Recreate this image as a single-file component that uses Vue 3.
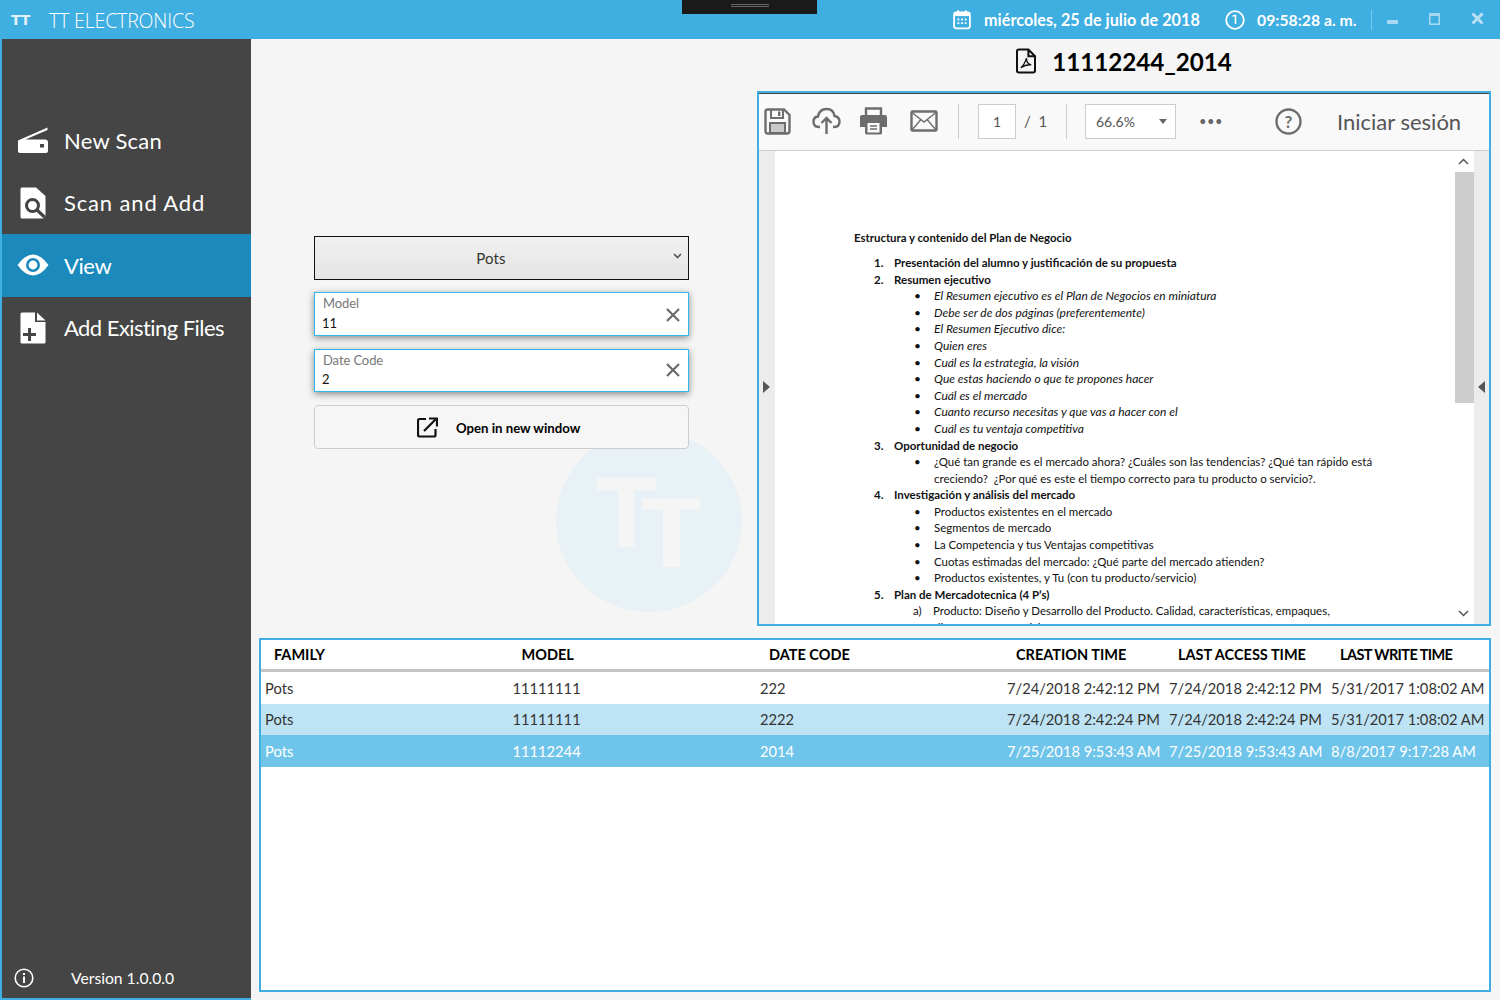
<script setup>
import { ref } from "vue";

const menu = ref([
  { label: "New Scan", icon: "scan", spacing: "0.25px" },
  { label: "Scan and Add", icon: "search", spacing: "0.85px" },
  { label: "View", icon: "eye", active: true, spacing: "-0.4px" },
  { label: "Add Existing Files", icon: "add", spacing: "-0.55px" },
]);

const rows = ref([
  { family: "Pots", model: "11111111", date: "222", created: "7/24/2018 2:42:12 PM", access: "7/24/2018 2:42:12 PM", write: "5/31/2017 1:08:02 AM" },
  { family: "Pots", model: "11111111", date: "2222", created: "7/24/2018 2:42:24 PM", access: "7/24/2018 2:42:24 PM", write: "5/31/2017 1:08:02 AM", cls: "hover" },
  { family: "Pots", model: "11112244", date: "2014", created: "7/25/2018 9:53:43 AM", access: "7/25/2018 9:53:43 AM", write: "8/8/2017 9:17:28 AM", cls: "selected" },
]);

const columns = ["FAMILY", "MODEL", "DATE CODE", "CREATION TIME", "LAST ACCESS TIME", "LAST WRITE TIME"];

//pdf page content, kind decides the indent
const pdfLines = [
  { kind: "num", mark: "1.", text: "Presentación del alumno y justificación de su propuesta" },
  { kind: "num", mark: "2.", text: "Resumen ejecutivo" },
  { kind: "it", mark: "•", text: "El Resumen ejecutivo es el Plan de Negocios en miniatura" },
  { kind: "it", mark: "•", text: "Debe ser de dos páginas (preferentemente)" },
  { kind: "it", mark: "•", text: "El Resumen Ejecutivo dice:" },
  { kind: "it", mark: "•", text: "Quien eres" },
  { kind: "it", mark: "•", text: "Cuál es la estrategia, la visión" },
  { kind: "it", mark: "•", text: "Que estas haciendo o que te propones hacer" },
  { kind: "it", mark: "•", text: "Cuál es el mercado" },
  { kind: "it", mark: "•", text: "Cuanto recurso necesitas y que vas a hacer con el" },
  { kind: "it", mark: "•", text: "Cuál es tu ventaja competitiva" },
  { kind: "num", mark: "3.", text: "Oportunidad de negocio" },
  { kind: "sub", mark: "•", text: "¿Qué tan grande es el mercado ahora? ¿Cuáles son las tendencias? ¿Qué tan rápido está" },
  { kind: "sub", mark: "", text: "creciendo?  ¿Por qué es este el tiempo correcto para tu producto o servicio?." },
  { kind: "num", mark: "4.", text: "Investigación y análisis del mercado" },
  { kind: "sub", mark: "•", text: "Productos existentes en el mercado" },
  { kind: "sub", mark: "•", text: "Segmentos de mercado" },
  { kind: "sub", mark: "•", text: "La Competencia y tus Ventajas competitivas" },
  { kind: "sub", mark: "•", text: "Cuotas estimadas del mercado: ¿Qué parte del mercado atienden?" },
  { kind: "sub", mark: "•", text: "Productos existentes, y Tu (con tu producto/servicio)" },
  { kind: "num", mark: "5.", text: "Plan de Mercadotecnica (4 P’s)" },
  { kind: "alpha", mark: "a)", text: "Producto: Diseño y Desarrollo del Producto. Calidad, características, empaques," },
  { kind: "sub", mark: "", text: "diseño, marca, servicios y garantías." },
];
</script>

<template>
  <div class="window">
    <header class="titlebar">
      <div class="brand">
        <span class="logo">TT</span>
        <span class="app-name">TT ELECTRONICS</span>
      </div>
      <div class="notch"><span></span></div>
      <div class="status">
        <svg class="st-icon" width="18" height="21" viewBox="0 0 20 22">
          <rect x="1.2" y="3.2" width="17.6" height="17.6" rx="2.5" fill="none" stroke="#fff" stroke-width="2" />
          <rect x="1.2" y="3.2" width="17.6" height="4" fill="#fff" />
          <rect x="4.5" y="0.8" width="2.4" height="4" rx="1" fill="#fff" />
          <rect x="13" y="0.8" width="2.4" height="4" rx="1" fill="#fff" />
          <path d="M5 10h2v2H5zM9 10h2v2H9zM13 10h2v2h-2zM5 14h2v2H5zM9 14h2v2H9zM13 14h2v2h-2z" fill="#fff" />
        </svg>
        <span class="st-text date">miércoles, 25 de julio de 2018</span>
        <svg class="st-icon" width="20" height="20" viewBox="0 0 20 20">
          <circle cx="10" cy="10" r="8.8" fill="none" stroke="#fff" stroke-width="1.8" />
          <path d="M7.5 6 L10.5 5.5 V14" fill="none" stroke="#fff" stroke-width="1.6" />
        </svg>
        <span class="st-text time">09:58:28 a. m.</span>
        <span class="st-sep"></span>
        <div class="win-btns">
          <svg width="11" height="11" viewBox="0 0 11 11"><rect x="0" y="7" width="11" height="4" fill="#a6d9f1" /></svg>
          <svg width="11" height="12" viewBox="0 0 11 12"><rect x="0.8" y="0.8" width="9.4" height="10.4" fill="none" stroke="#a6d9f1" stroke-width="1.6" /><rect x="0" y="0" width="11" height="3" fill="#a6d9f1" /></svg>
          <svg width="13" height="13" viewBox="0 0 13 13"><path d="M1.5 1.5 L11.5 11.5 M11.5 1.5 L1.5 11.5" stroke="#b8e1f4" stroke-width="3" /></svg>
        </div>
      </div>
    </header>

    <div class="body">
      <aside class="sidebar">
        <nav class="menu">
          <div v-for="item in menu" :key="item.label" class="menu-item" :class="{ active: item.active }">
            <span class="menu-icon">
              <svg v-if="item.icon === 'scan'" width="32" height="27" viewBox="0 0 32 27">
                <path d="M1 13.500 L30.500 0.500 V3 L8.500 12.500 H28 Q31 12.500 31 15.500 V24 Q31 26 29 26 H3 Q1 26 1 24 Z" fill="#fff" />
                <rect x="23" y="17" width="4" height="3.500" fill="#454545" />
              </svg>
              <svg v-else-if="item.icon === 'search'" width="26" height="32" viewBox="0 0 26 32">
                <path d="M2 0.5 H16 L25.5 9 V29 L23 31.5 H2 Q0.5 31.5 0.5 30 V2 Q0.5 0.5 2 0.5 Z" fill="#fff" />
                <circle cx="12.5" cy="18.5" r="6" fill="none" stroke="#454545" stroke-width="3" />
                <path d="M17 23 L24.5 30" stroke="#454545" stroke-width="3.2" />
              </svg>
              <svg v-else-if="item.icon === 'eye'" width="32" height="22" viewBox="0 0 32 22">
                <path d="M0.5 11 Q8 0.5 16 0.5 Q24 0.5 31.5 11 Q24 21.5 16 21.5 Q8 21.5 0.5 11 Z" fill="#fff" />
                <circle cx="16" cy="11" r="7" fill="#1b89bc" />
                <circle cx="16" cy="11" r="4.4" fill="#fff" />
              </svg>
              <svg v-else width="26" height="32" viewBox="0 0 26 32">
                <path d="M2 0.5 H15 V10 H25.5 V30 Q25.5 31.5 24 31.5 H2 Q0.5 31.5 0.5 30 V2 Q0.5 0.5 2 0.5 Z M17 0.5 L25.5 8.5 H17 Z" fill="#fff" />
                <path d="M3 22.5 H16 M9.5 16 V29" stroke="#454545" stroke-width="3" />
              </svg>
            </span>
            <span class="menu-label" :style="{ letterSpacing: item.spacing }">{{ item.label }}</span>
          </div>
        </nav>
        <div class="version">
          <svg width="20" height="20" viewBox="0 0 20 20">
            <circle cx="10" cy="10" r="8.8" fill="none" stroke="#fff" stroke-width="1.6" />
            <rect x="9" y="8.5" width="2" height="6.5" fill="#fff" />
            <rect x="9" y="5" width="2" height="2" fill="#fff" />
          </svg>
          <span>Version 1.0.0.0</span>
        </div>
      </aside>

      <main class="main">
        <div class="top">
          <section class="form">
            <div class="select">
              <span>Pots</span>
              <svg class="chev" width="9" height="6" viewBox="0 0 9 6"><path d="M1 1 L4.5 4.5 L8 1" fill="none" stroke="#555" stroke-width="1.6" /></svg>
            </div>
            <div class="field">
              <label>Model</label>
              <div class="value">11</div>
              <svg class="clear" width="16" height="16" viewBox="0 0 16 16"><path d="M2 2 L14 14 M14 2 L2 14" stroke="#6a6a6a" stroke-width="2.200" /></svg>
            </div>
            <div class="field short">
              <label>Date Code</label>
              <div class="value">2</div>
              <svg class="clear" width="16" height="16" viewBox="0 0 16 16"><path d="M2 2 L14 14 M14 2 L2 14" stroke="#6a6a6a" stroke-width="2.200" /></svg>
            </div>
            <button class="open-btn">
              <svg width="21" height="21" viewBox="0 0 21 21">
                <path d="M9 2 H2.5 Q1 2 1 3.5 V18 Q1 19.5 2.5 19.5 H17 Q18.5 19.5 18.5 18 V12" fill="none" stroke="#111" stroke-width="2.200" />
                <path d="M7 14 L18.5 2.500 M12 1.500 H20 V9.500" fill="none" stroke="#111" stroke-width="2.200" />
              </svg>
              <span>Open in new window</span>
            </button>
          </section>

          <section class="doc">
            <h1 class="doc-title">
              <svg width="20" height="26" viewBox="0 0 21 26">
                <path d="M3 1 H13 L20 8 V23 Q20 25 18 25 H3 Q1 25 1 23 V3 Q1 1 3 1 Z M13 1 V8 H20" fill="none" stroke="#111" stroke-width="2.200" />
                <path d="M5 20 Q9 17 11 10 Q11 16 16 17 Q10 16.500 5 20 Z" fill="none" stroke="#111" stroke-width="1.400" />
              </svg>
              <span>11112244_2014</span>
            </h1>
            <div class="viewer">
              <div class="toolbar">
                <svg class="tool" width="27" height="27" viewBox="0 0 27 27">
                  <path d="M3.500 1.500 H20 L25.500 7 V23 Q25.500 25.500 23 25.500 H4 Q1.500 25.500 1.500 23 V3.500 Q1.500 1.500 3.500 1.500 Z" fill="none" stroke="#6d6d6d" stroke-width="2.400" />
                  <path d="M7 2 V10 H19 V2" fill="none" stroke="#6d6d6d" stroke-width="2" />
                  <rect x="14" y="3.500" width="2.400" height="4.500" fill="#6d6d6d" />
                  <rect x="6" y="15" width="15" height="10" fill="#c9c9c9" stroke="#6d6d6d" stroke-width="2" />
                </svg>
                <svg class="tool upload" width="29" height="28" viewBox="0 0 29 28">
                  <path d="M8 20 H7 Q1.500 20 1.500 14.500 Q1.500 10 6 9.500 Q7.500 2 14.500 2 Q21.500 2 22.500 9 Q27.500 10 27.500 14.500 Q27.500 20 22 20 H21" fill="none" stroke="#6d6d6d" stroke-width="2.400" />
                  <path d="M14.500 27 V11 M9.500 16 L14.500 11 L19.500 16" fill="none" stroke="#6d6d6d" stroke-width="2.400" />
                </svg>
                <svg class="tool print" width="29" height="28" viewBox="0 0 29 28">
                  <path d="M7 8 V1.500 H22 V8" fill="none" stroke="#6d6d6d" stroke-width="2.400" />
                  <path d="M3 8 H26 Q28 8 28 10 V20 H23 V26 Q23 27.500 21 27.500 H8 Q6 27.500 6 26 V20 H1 V10 Q1 8 3 8 Z" fill="#6d6d6d" />
                  <rect x="8.500" y="16" width="12" height="9.500" fill="#f9f9f9" />
                  <path d="M11 19 H18 M11 22 H18" stroke="#6d6d6d" stroke-width="1.400" />
                </svg>
                <svg class="tool mail" width="28" height="22" viewBox="0 0 28 22">
                  <rect x="1.500" y="1.500" width="25" height="19" rx="1" fill="none" stroke="#6d6d6d" stroke-width="2.400" />
                  <path d="M2 2.500 L14 12 L26 2.500 M2 20 L11 9.500 M26 20 L17 9.500" fill="none" stroke="#6d6d6d" stroke-width="1.400" />
                </svg>
                <span class="tb-sep first"></span>
                <span class="page-box">1</span>
                <span class="page-of">/ &nbsp;1</span>
                <span class="tb-sep second"></span>
                <span class="zoom-box">66.6%<i class="caret"></i></span>
                <span class="more">•••</span>
                <svg class="help" width="27" height="27" viewBox="0 0 27 27">
                  <circle cx="13.500" cy="13.500" r="12" fill="none" stroke="#6d6d6d" stroke-width="2.400" />
                  <text x="13.500" y="19.500" text-anchor="middle" font-size="17" font-weight="700" font-family="Lato, sans-serif" fill="#6d6d6d">?</text>
                </svg>
                <span class="login">Iniciar sesión</span>
              </div>
              <div class="pdf-area">
                <div class="side-strip left"><i class="arrow-r"></i></div>
                <div class="page">
                  <div class="pdf-heading">Estructura y contenido del Plan de Negocio</div>
                  <div v-for="(line, i) in pdfLines" :key="i" class="pdf-line" :class="line.kind">
                    <span class="mark">{{ line.mark }}</span>
                    <span>{{ line.text }}</span>
                  </div>
                </div>
                <div class="scrollbar">
                  <svg width="11" height="7" viewBox="0 0 11 7"><path d="M1 6 L5.500 1.500 L10 6" fill="none" stroke="#555" stroke-width="1.500" /></svg>
                  <div class="thumb"></div>
                  <svg class="down" width="11" height="7" viewBox="0 0 11 7"><path d="M1 1 L5.500 5.500 L10 1" fill="none" stroke="#555" stroke-width="1.500" /></svg>
                </div>
                <div class="side-strip right"><i class="arrow-l"></i></div>
              </div>
            </div>
          </section>

          <!-- watermark logo, sits behind the form and the viewer -->
          <svg class="watermark" width="186" height="182" viewBox="0 0 186 182">
            <ellipse cx="93" cy="91" rx="93" ry="91" fill="#e8f1f5" />
            <path d="M41 48 H100 V60 H78 V117 H62 V60 H41 Z" fill="#f5f5f5" />
            <path d="M86 68 H144 V80 H124 V137 H107 V80 H86 Z" fill="#f5f5f5" />
          </svg>
        </div>

        <section class="table">
          <div class="thead">
            <div v-for="col in columns" :key="col" class="th">{{ col }}</div>
          </div>
          <div v-for="row in rows" :key="row.date" class="tr" :class="row.cls">
            <div class="td">{{ row.family }}</div>
            <div class="td">{{ row.model }}</div>
            <div class="td">{{ row.date }}</div>
            <div class="td">{{ row.created }}</div>
            <div class="td">{{ row.access }}</div>
            <div class="td">{{ row.write }}</div>
          </div>
        </section>
      </main>
    </div>
  </div>
</template>

<style>
html,
body {
  margin: 0;
  background: #f5f5f5;
}
</style>

<style scoped>
.window {
  width: 1500px;
  height: 1000px;
  display: flex;
  flex-direction: column;
  overflow: hidden;
  font-family: Lato, "Open Sans", sans-serif;
  color: #111;
  background: #f5f5f5;
}

/* title bar */
.titlebar {
  height: 39px;
  flex: none;
  background: #3faee0;
  display: flex;
  align-items: center;
  position: relative;
  color: #fff;
}
.brand {
  display: flex;
  align-items: center;
  padding-left: 11px;
}
.logo {
  font: 700 14px "DejaVu Sans", sans-serif;
  width: 38px;
  opacity: 0.85;
}
.app-name {
  font: 300 19.5px "Open Sans", sans-serif;
  letter-spacing: -0.15px;
  padding-top: 1px;
}
.notch {
  position: absolute;
  left: 682px;
  top: 0;
  width: 135px;
  height: 14px;
  background: #1a1a1a;
  display: flex;
  justify-content: center;
  padding-top: 4px;
  box-sizing: border-box;
}
.notch span {
  width: 38px;
  height: 3px;
  border-top: 1px solid #666;
  border-bottom: 1px solid #666;
  box-sizing: border-box;
}
.status {
  margin-left: auto;
  display: flex;
  align-items: center;
  height: 100%;
}
.st-text {
  font-weight: 700;
  letter-spacing: 0.05px;
}
.date {
  margin-left: 13px;
  width: 241px;
  font-size: 16.150px;
}
.time {
  margin-left: 12px;
  width: 114px;
  font-size: 15.700px;
}
.st-sep {
  width: 1px;
  height: 20px;
  background: #7cc7ea;
}
.win-btns {
  display: flex;
  align-items: center;
  gap: 31px;
  margin-left: 15px;
  margin-right: 16px;
  height: 100%;
  padding-bottom: 2px;
  box-sizing: border-box;
}

.body {
  flex: 1;
  display: flex;
  min-height: 0;
}

/* side menu */
.sidebar {
  width: 251px;
  flex: none;
  box-sizing: border-box;
  background: #454545;
  border-left: 2px solid #3faee0;
  border-bottom: 2px solid #3faee0;
  color: #fff;
  display: flex;
  flex-direction: column;
}
.menu {
  padding-top: 70px;
}
.menu-item {
  height: 62.500px;
  display: flex;
  align-items: center;
}
.menu-item.active {
  background: #1b89bc;
}
.menu-icon {
  width: 32px;
  margin-left: 15px;
  display: flex;
  justify-content: center;
}
.menu-label {
  margin-left: 15px;
  font-size: 22px;
}
.version {
  margin-top: auto;
  height: 39px;
  display: flex;
  align-items: center;
  padding-left: 12px;
  padding-bottom: 2px;
  box-sizing: border-box;
  font-size: 15.700px;
}
.version span {
  margin-left: 37px;
}

.main {
  flex: 1;
  min-width: 0;
  display: flex;
  flex-direction: column;
  padding: 0 9px 8px 8px;
}
.top {
  height: 587px;
  flex: none;
  display: flex;
  position: relative;
}

/* form column */
.form {
  width: 375px;
  margin-left: 55px;
  padding-top: 197px;
  display: flex;
  flex-direction: column;
  position: relative;
  z-index: 1;
}
.select {
  height: 44px;
  box-sizing: border-box;
  border: 1px solid #111;
  background: linear-gradient(#f0f0f0, #e5e5e5);
  display: flex;
  align-items: center;
  justify-content: center;
  font-size: 15px;
  letter-spacing: 0.1px;
  color: #333;
  position: relative;
  padding-right: 21px;
}
.chev {
  position: absolute;
  right: 6px;
  top: 16px;
}
.field {
  height: 44px;
  margin-top: 12px;
  box-sizing: border-box;
  border: 1px solid #2fb7ee;
  background: #fff;
  box-shadow: 0 2px 7px rgba(0, 0, 0, 0.45);
  position: relative;
  padding: 2px 8px 0;
}
.field.short {
  height: 43px;
  margin-top: 13px;
}
.field label {
  display: block;
  font-size: 13px;
  line-height: 16px;
  letter-spacing: -0.1px;
  color: #777;
}
.field .value {
  font-size: 13px;
  line-height: 16px;
  margin: 4px 0 0 -1px;
  color: #111;
}
.field.short .value {
  margin-top: 3px;
}
.clear {
  position: absolute;
  right: 7px;
  top: 14px;
}
.field.short .clear {
  top: 12px;
}
.open-btn {
  height: 44px;
  margin-top: 13px;
  border: 1px solid #ccc;
  border-radius: 4px;
  background: #f6f6f6;
  display: flex;
  align-items: center;
  padding: 0 0 0 102px;
  font: 700 13.200px Lato, sans-serif;
  color: #000;
}
.open-btn span {
  margin-left: 18px;
  padding-top: 1px;
}

/* pdf viewer */
.doc {
  width: 734px;
  margin-left: 68px;
  display: flex;
  flex-direction: column;
  position: relative;
  z-index: 1;
}
.doc-title {
  height: 52px;
  margin: 0;
  display: flex;
  align-items: center;
  justify-content: center;
  gap: 16px;
  font: 700 24.200px Lato, sans-serif;
  color: #000;
  padding-bottom: 8px;
  box-sizing: border-box;
}
.viewer {
  height: 535px;
  box-sizing: border-box;
  border: 2px solid #3faee0;
  display: flex;
  flex-direction: column;
  background: #fff;
}
.toolbar {
  height: 58px;
  flex: none;
  box-sizing: border-box;
  background: #f9f9f9;
  border-top: 1px solid #444;
  border-bottom: 1px solid #ccc;
  display: flex;
  align-items: center;
  color: #555;
  padding-bottom: 2px;
}
.tool {
  flex: none;
}
.toolbar > .tool:first-child {
  margin-left: 5px;
}
.upload {
  margin-left: 21px;
}
.print {
  margin-left: 18px;
}
.mail {
  margin-left: 22px;
}
.tb-sep {
  width: 1px;
  height: 35px;
  background: #ccc;
}
.tb-sep.first {
  margin-left: 20px;
}
.page-box {
  width: 38px;
  height: 35px;
  box-sizing: border-box;
  margin-left: 19px;
  border: 1px solid #ccc;
  background: #fff;
  display: flex;
  align-items: center;
  justify-content: center;
  font-size: 14px;
}
.page-of {
  margin-left: 8px;
  width: 42px;
  font-size: 15px;
}
.zoom-box {
  width: 91px;
  height: 35px;
  box-sizing: border-box;
  margin-left: 18px;
  border: 1px solid #ccc;
  background: #fff;
  display: flex;
  align-items: center;
  padding-left: 10px;
  font-size: 14px;
  position: relative;
}
.caret {
  position: absolute;
  right: 8px;
  top: 14px;
  border-left: 4.500px solid transparent;
  border-right: 4.500px solid transparent;
  border-top: 5px solid #666;
}
.more {
  margin-left: 23px;
  font-size: 13px;
  letter-spacing: 0.500px;
  color: #666;
  width: 26px;
}
.help {
  margin-left: 50px;
}
.login {
  margin-left: 35px;
  font-size: 22px;
  color: #555;
}
.pdf-area {
  flex: 1;
  min-height: 0;
  display: flex;
  background: #fff;
}
.side-strip {
  flex: none;
  background: #ececec;
  display: flex;
  align-items: center;
  justify-content: center;
  padding-bottom: 2px;
  box-sizing: border-box;
}
.side-strip.left {
  width: 16px;
  padding-right: 2px;
}
.side-strip.right {
  width: 15px;
}
.arrow-r {
  border-top: 6px solid transparent;
  border-bottom: 6px solid transparent;
  border-left: 7px solid #555;
}
.arrow-l {
  border-top: 6px solid transparent;
  border-bottom: 6px solid transparent;
  border-right: 7px solid #555;
}
.page {
  width: 680px;
  flex: none;
  box-sizing: border-box;
  padding: 79px 0 0 79px;
  overflow: hidden;
  background: #fff;
  font-size: 11.460px;
  line-height: 16.600px;
  color: #111;
}
.pdf-heading {
  font-weight: 700;
  margin-bottom: 8.400px;
  font-size: 11.400px;
}
.pdf-line {
  display: flex;
  white-space: pre;
}
.pdf-line .mark {
  flex: none;
}
.pdf-line.num {
  font-weight: 700;
  padding-left: 20px;
  font-size: 11.500px;
}
.pdf-line.num .mark {
  width: 20px;
}
.pdf-line.it,
.pdf-line.sub {
  padding-left: 60px;
}
.pdf-line.it .mark,
.pdf-line.sub .mark {
  width: 20px;
  font-style: normal;
}
.pdf-line.it {
  font-style: italic;
  font-size: 12px;
}
.pdf-line.alpha {
  padding-left: 59px;
}
.pdf-line.alpha .mark {
  width: 20px;
}
.scrollbar {
  width: 19px;
  flex: none;
  background: #fff;
  display: flex;
  flex-direction: column;
  align-items: center;
  padding: 7px 2px 7px 0;
  box-sizing: border-box;
}
.thumb {
  width: 19px;
  height: 231px;
  margin-top: 7px;
  margin-right: -2px;
  flex: none;
  background: #cdcdcd;
}
.down {
  margin-top: auto;
}

.watermark {
  position: absolute;
  left: 297px;
  top: 391px;
}

/* file table */
.table {
  flex: 1;
  min-height: 0;
  margin-top: 12px;
  box-sizing: border-box;
  border: 2px solid #3faee0;
  background: #fff;
  font-family: Lato, sans-serif;
}
.thead,
.tr {
  display: grid;
  grid-template-columns: 247.500px 247.500px 247px 162px 162px 162px;
}
.thead {
  height: 32px;
  box-sizing: border-box;
  border-bottom: 3px solid #c4c4c4;
  align-items: center;
}
.th {
  padding-left: 13px;
  font-size: 14.500px;
  font-weight: 700;
  color: #000;
  white-space: nowrap;
}
.th:last-child {
  letter-spacing: -0.6px;
}
.tr {
  height: 31.670px;
  align-items: center;
}
.td {
  padding-left: 4px;
  font-size: 14.700px;
  color: #333;
  white-space: nowrap;
}
.tr.hover {
  background: #bee3f4;
}
.tr.selected {
  background: #6fc4ea;
}
.tr.selected .td {
  color: #fff;
}
</style>
